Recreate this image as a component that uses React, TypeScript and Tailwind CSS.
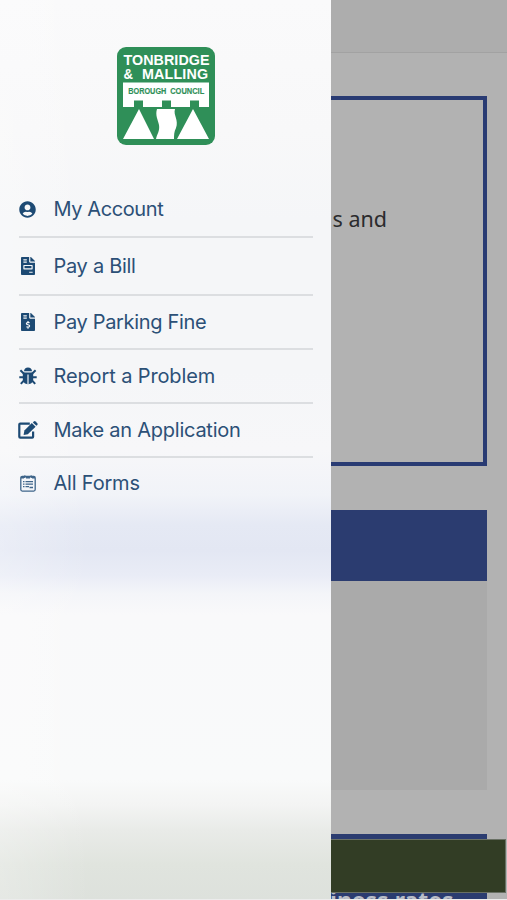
import type { ReactNode } from "react";
import { FaFileInvoice, FaFileInvoiceDollar, FaUserCircle } from "react-icons/fa";

function Logo() {
  return (
    <svg viewBox="0 0 98 98" className="h-[98px] w-[98px] shrink-0" fontFamily="'Liberation Sans', sans-serif" fontWeight="700">
      <rect width="98" height="98" rx="9" fill="#2f8f58" />
      <text x="6.5" y="17.6" fontSize="14.3" fill="#fff" textLength="86" lengthAdjust="spacing">TONBRIDGE</text>
      <text x="6.5" y="31.8" fontSize="14.3" fill="#fff" textLength="9.5" lengthAdjust="spacingAndGlyphs">&amp;</text>
      <text x="25" y="31.8" fontSize="14.3" fill="#fff" textLength="66" lengthAdjust="spacing">MALLING</text>
      <path d="M6 35.5H92V60H82V53.5H73V60H54V53.5H45V60H26V53.5H17V60H6Z" fill="#fff" />
      <g fontSize="8.2" fill="#2f8f58" stroke="#2f8f58" strokeWidth=".15">
        <text x="11.3" y="46.8" textLength="38" lengthAdjust="spacingAndGlyphs">BOROUGH</text>
        <text x="53.2" y="46.8" textLength="34" lengthAdjust="spacingAndGlyphs">COUNCIL</text>
      </g>
      <path d="M22 62 6 92H37ZM76 62 60 92H92Z" fill="#fff" />
      <path d="M40 62H58C56 68 62 73 59 81C57 85 57 88 57 92H39C40 87 43 84 42 78C41 73 38 68 40 62Z" fill="#fff" />
    </svg>
  );
}

function BugIcon() {
  return (
    <svg viewBox="0 0 18 18" className="h-[18px] w-[18px]" fill="none" stroke="#1d4a74" strokeWidth="2">
      <path d="M5 4.3C5 1.8 6.7.5 9 .5S13 1.8 13 4.3Z" fill="#1d4a74" stroke="none" />
      <path d="M3.8 5.4H14.2V12C14.2 15.2 12 17.2 9 17.2S3.8 15.2 3.8 12Z" fill="#1d4a74" stroke="none" />
      <path d="M1.4 3.2 5 6.8M16.6 3.2 13 6.8M.3 10.3H5M17.7 10.3H13M1.8 16.9 5.2 13.3M16.2 16.9 12.8 13.3" />
      <path d="M9 7.4V17.2" stroke="#f5f6f8" strokeWidth="1.2" />
    </svg>
  );
}

function EditIcon() {
  return (
    <svg viewBox="0 0 20 18" className="h-[18px] w-5" fill="#1d4a74">
      <path d="M11.8 2.7H2.2Q1.3 2.7 1.3 3.6V15.7Q1.3 16.6 2.2 16.6H14.2Q15.1 16.6 15.1 15.7V10.5" fill="none" stroke="#1d4a74" strokeWidth="2.2" />
      <path d="M13.8 2.1 17.6 5.8 9.8 13.3 5.6 14 6.4 9.5Z" />
      <path d="M14.8 1.4 15.9.4Q16.8-.2 17.6.5L19.3 2.2Q20 3 19.3 3.9L18.4 4.8Z" />
    </svg>
  );
}

function FormsIcon() {
  return (
    <svg viewBox="0 0 16 17" className="h-[17px] w-4" fill="none" stroke="#3f658a" strokeWidth="1.3">
      <rect x=".8" y="1.3" width="14.4" height="14.8" rx="1.5" />
      <path d="M1 2.8H4M6 2.8H10M12 2.8H15M4.8.5V3M11.2.5V3" strokeWidth="1.5" />
      <path d="M3 6.7H4.5M5.5 6.7H13M3 9.2H4.5M5.5 9.2H13M3 11.7H4.5M5.5 11.7H9M9.5 12.5H13" strokeWidth="1.3" />
    </svg>
  );
}

function Item({ icon, label, row, spacing }: { icon: ReactNode; label: string; row: string; spacing: string }) {
  return (
    <li className={`flex items-center border-[#dcdee1] ${row}`}>
      <span className="-ml-0.5 mr-[15px] flex w-[22px] shrink-0 justify-center">{icon}</span>
      <span className={`whitespace-nowrap pb-px text-[20px] leading-6 ${spacing}`}>{label}</span>
    </li>
  );
}

export default function App() {
  return (
    <div className="relative h-[900px] w-[507px] overflow-hidden bg-[#b2b2b2]">
      <main className="flex h-[899px] flex-col overflow-hidden pr-5">
        <header className="-mr-5 h-[53px] shrink-0 border-b border-[#a2a2a2] bg-[#adadad]" />
        <section className="mt-[43px] flex h-[370px] shrink-0 justify-end border-4 border-[#293b73] pr-24 pt-[103px]">
          <p className="font-['Noto_Sans'] text-[21.5px] leading-8 text-[#2b2b2d]">s and</p>
        </section>
        <section className="mt-11 h-[280px] shrink-0 bg-[#aaaaaa]">
          <div className="h-[71px] bg-[#2b3c70]" />
        </section>
        <section className="mt-11 h-[65px] shrink-0 bg-[#2b3c70] pl-[331px] pt-[54px]">
          <p className="-ml-px whitespace-nowrap font-['Noto_Sans'] text-[23px] font-bold leading-6 text-[#b9bdc7]">iness rates</p>
        </section>
      </main>
      <div className="absolute bottom-[7px] left-0 h-[54px] w-[506px] border border-[#697064] bg-[#323d25]" />
      <div className="absolute bottom-0 left-0 h-px w-full bg-[#ececec]" />
      <aside className="absolute left-0 top-0 flex h-[899px] w-[331px] flex-col items-center overflow-hidden bg-[linear-gradient(90deg,rgba(255,255,255,0.25)_0px,rgba(255,255,255,0)_90px),linear-gradient(180deg,#fafafb_0px,#f8f8f9_130px,#f5f6f8_220px,#f5f6f8_370px,#f7f7f9_450px,#f1f3f8_495px,#e5e9f4_525px,#e3e7f3_550px,#e9ecf6_575px,#f4f5f9_594px,#f9f9fa_615px,#f9fafa_780px,#f3f4f3_805px,#e9ebe8_830px,#e0e4de_865px,#dde1dc_899px)] pt-[47px]">
        <div className="pl-px">
          <Logo />
        </div>
        <ul className="mt-[38px] w-[294px] font-['Inter',sans-serif] text-[#2c5077]">
          <Item label="My Account" row="h-[55px] border-b-2" spacing="tracking-[-0.4px]" icon={<FaUserCircle className="h-[17px] w-[17px] text-[#1d4a74]" />} />
          <Item label="Pay a Bill" row="h-[58px] border-b-2" spacing="tracking-[-0.3px]" icon={<FaFileInvoice preserveAspectRatio="none" className="h-[18px] w-[14px] text-[#1d4a74]" />} />
          <Item label="Pay Parking Fine" row="h-[54px] border-b-2" spacing="tracking-[-0.33px]" icon={<FaFileInvoiceDollar preserveAspectRatio="none" className="h-[18px] w-[14px] text-[#1d4a74]" />} />
          <Item label="Report a Problem" row="h-[54px] border-b-2" spacing="tracking-[-0.12px]" icon={<BugIcon />} />
          <Item label="Make an Application" row="h-[54px] border-b-2" spacing="tracking-[-0.25px]" icon={<EditIcon />} />
          <Item label="All Forms" row="h-[51px]" spacing="tracking-[-0.2px]" icon={<FormsIcon />} />
        </ul>
      </aside>
    </div>
  );
}
